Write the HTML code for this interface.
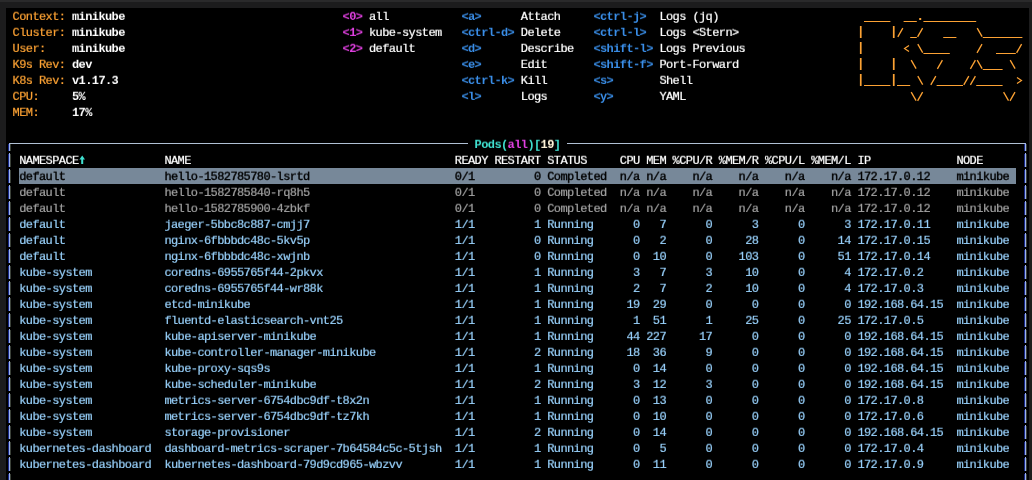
<!DOCTYPE html>
<html><head><meta charset="utf-8"><style>
html,body{margin:0;padding:0;}
body{width:1032px;height:480px;overflow:hidden;background:#1c1c1d;position:relative;font-family:"Liberation Mono",monospace;font-size:12px;}
#topband{position:absolute;left:0;top:0;width:1032px;height:2px;background:#2a2a2b;}
#term{position:absolute;left:6px;top:8px;width:1023px;height:472px;background:#000;}
.row{position:absolute;left:0;width:1032px;height:16px;transform:scaleY(0.92);transform-origin:0 11px;will-change:transform;}
.s{position:absolute;top:0;white-space:pre;height:16px;line-height:16px;letter-spacing:-0.601px;-webkit-text-stroke:0.22px currentColor;}
.b{-webkit-text-stroke:0;}
.b{font-weight:bold;}
.k{-webkit-text-stroke:0.4px #000;}
.ln{position:absolute;background:#b0c0d4;}
</style></head><body>
<div id="topband"></div>
<div id="term"></div>

<div style="position:absolute;left:19.20px;top:168px;width:996.60px;height:16px;background:#778899"></div>
<div class="ln" style="left:9px;top:143px;width:459px;height:1px"></div>
<div class="ln" style="left:567px;top:143px;width:459px;height:1px"></div>
<div style="position:absolute;background:#9cb2ee;left:9px;top:143px;width:1px;height:8px"></div>
<div style="position:absolute;background:#182888;left:8px;top:144px;width:1px;height:7px"></div>
<div style="position:absolute;background:#3a4038;left:10px;top:144px;width:1px;height:7px"></div>
<div style="position:absolute;background:#9cb2ee;left:1025px;top:143px;width:1px;height:8px"></div>
<div style="position:absolute;background:#182888;left:1024px;top:144px;width:1px;height:7px"></div>
<div style="position:absolute;background:#3a4038;left:1026px;top:144px;width:1px;height:7px"></div>
<div style="position:absolute;background:#9cb2ee;left:9px;top:153px;width:1px;height:14px"></div>
<div style="position:absolute;background:#182888;left:8px;top:154px;width:1px;height:13px"></div>
<div style="position:absolute;background:#3a4038;left:10px;top:154px;width:1px;height:13px"></div>
<div style="position:absolute;background:#9cb2ee;left:1025px;top:153px;width:1px;height:14px"></div>
<div style="position:absolute;background:#182888;left:1024px;top:154px;width:1px;height:13px"></div>
<div style="position:absolute;background:#3a4038;left:1026px;top:154px;width:1px;height:13px"></div>
<div style="position:absolute;background:#9cb2ee;left:9px;top:169px;width:1px;height:14px"></div>
<div style="position:absolute;background:#182888;left:8px;top:170px;width:1px;height:13px"></div>
<div style="position:absolute;background:#3a4038;left:10px;top:170px;width:1px;height:13px"></div>
<div style="position:absolute;background:#9cb2ee;left:1025px;top:169px;width:1px;height:14px"></div>
<div style="position:absolute;background:#182888;left:1024px;top:170px;width:1px;height:13px"></div>
<div style="position:absolute;background:#3a4038;left:1026px;top:170px;width:1px;height:13px"></div>
<div style="position:absolute;background:#9cb2ee;left:9px;top:185px;width:1px;height:14px"></div>
<div style="position:absolute;background:#182888;left:8px;top:186px;width:1px;height:13px"></div>
<div style="position:absolute;background:#3a4038;left:10px;top:186px;width:1px;height:13px"></div>
<div style="position:absolute;background:#9cb2ee;left:1025px;top:185px;width:1px;height:14px"></div>
<div style="position:absolute;background:#182888;left:1024px;top:186px;width:1px;height:13px"></div>
<div style="position:absolute;background:#3a4038;left:1026px;top:186px;width:1px;height:13px"></div>
<div style="position:absolute;background:#9cb2ee;left:9px;top:201px;width:1px;height:14px"></div>
<div style="position:absolute;background:#182888;left:8px;top:202px;width:1px;height:13px"></div>
<div style="position:absolute;background:#3a4038;left:10px;top:202px;width:1px;height:13px"></div>
<div style="position:absolute;background:#9cb2ee;left:1025px;top:201px;width:1px;height:14px"></div>
<div style="position:absolute;background:#182888;left:1024px;top:202px;width:1px;height:13px"></div>
<div style="position:absolute;background:#3a4038;left:1026px;top:202px;width:1px;height:13px"></div>
<div style="position:absolute;background:#9cb2ee;left:9px;top:217px;width:1px;height:14px"></div>
<div style="position:absolute;background:#182888;left:8px;top:218px;width:1px;height:13px"></div>
<div style="position:absolute;background:#3a4038;left:10px;top:218px;width:1px;height:13px"></div>
<div style="position:absolute;background:#9cb2ee;left:1025px;top:217px;width:1px;height:14px"></div>
<div style="position:absolute;background:#182888;left:1024px;top:218px;width:1px;height:13px"></div>
<div style="position:absolute;background:#3a4038;left:1026px;top:218px;width:1px;height:13px"></div>
<div style="position:absolute;background:#9cb2ee;left:9px;top:233px;width:1px;height:14px"></div>
<div style="position:absolute;background:#182888;left:8px;top:234px;width:1px;height:13px"></div>
<div style="position:absolute;background:#3a4038;left:10px;top:234px;width:1px;height:13px"></div>
<div style="position:absolute;background:#9cb2ee;left:1025px;top:233px;width:1px;height:14px"></div>
<div style="position:absolute;background:#182888;left:1024px;top:234px;width:1px;height:13px"></div>
<div style="position:absolute;background:#3a4038;left:1026px;top:234px;width:1px;height:13px"></div>
<div style="position:absolute;background:#9cb2ee;left:9px;top:249px;width:1px;height:14px"></div>
<div style="position:absolute;background:#182888;left:8px;top:250px;width:1px;height:13px"></div>
<div style="position:absolute;background:#3a4038;left:10px;top:250px;width:1px;height:13px"></div>
<div style="position:absolute;background:#9cb2ee;left:1025px;top:249px;width:1px;height:14px"></div>
<div style="position:absolute;background:#182888;left:1024px;top:250px;width:1px;height:13px"></div>
<div style="position:absolute;background:#3a4038;left:1026px;top:250px;width:1px;height:13px"></div>
<div style="position:absolute;background:#9cb2ee;left:9px;top:265px;width:1px;height:14px"></div>
<div style="position:absolute;background:#182888;left:8px;top:266px;width:1px;height:13px"></div>
<div style="position:absolute;background:#3a4038;left:10px;top:266px;width:1px;height:13px"></div>
<div style="position:absolute;background:#9cb2ee;left:1025px;top:265px;width:1px;height:14px"></div>
<div style="position:absolute;background:#182888;left:1024px;top:266px;width:1px;height:13px"></div>
<div style="position:absolute;background:#3a4038;left:1026px;top:266px;width:1px;height:13px"></div>
<div style="position:absolute;background:#9cb2ee;left:9px;top:281px;width:1px;height:14px"></div>
<div style="position:absolute;background:#182888;left:8px;top:282px;width:1px;height:13px"></div>
<div style="position:absolute;background:#3a4038;left:10px;top:282px;width:1px;height:13px"></div>
<div style="position:absolute;background:#9cb2ee;left:1025px;top:281px;width:1px;height:14px"></div>
<div style="position:absolute;background:#182888;left:1024px;top:282px;width:1px;height:13px"></div>
<div style="position:absolute;background:#3a4038;left:1026px;top:282px;width:1px;height:13px"></div>
<div style="position:absolute;background:#9cb2ee;left:9px;top:297px;width:1px;height:14px"></div>
<div style="position:absolute;background:#182888;left:8px;top:298px;width:1px;height:13px"></div>
<div style="position:absolute;background:#3a4038;left:10px;top:298px;width:1px;height:13px"></div>
<div style="position:absolute;background:#9cb2ee;left:1025px;top:297px;width:1px;height:14px"></div>
<div style="position:absolute;background:#182888;left:1024px;top:298px;width:1px;height:13px"></div>
<div style="position:absolute;background:#3a4038;left:1026px;top:298px;width:1px;height:13px"></div>
<div style="position:absolute;background:#9cb2ee;left:9px;top:313px;width:1px;height:14px"></div>
<div style="position:absolute;background:#182888;left:8px;top:314px;width:1px;height:13px"></div>
<div style="position:absolute;background:#3a4038;left:10px;top:314px;width:1px;height:13px"></div>
<div style="position:absolute;background:#9cb2ee;left:1025px;top:313px;width:1px;height:14px"></div>
<div style="position:absolute;background:#182888;left:1024px;top:314px;width:1px;height:13px"></div>
<div style="position:absolute;background:#3a4038;left:1026px;top:314px;width:1px;height:13px"></div>
<div style="position:absolute;background:#9cb2ee;left:9px;top:329px;width:1px;height:14px"></div>
<div style="position:absolute;background:#182888;left:8px;top:330px;width:1px;height:13px"></div>
<div style="position:absolute;background:#3a4038;left:10px;top:330px;width:1px;height:13px"></div>
<div style="position:absolute;background:#9cb2ee;left:1025px;top:329px;width:1px;height:14px"></div>
<div style="position:absolute;background:#182888;left:1024px;top:330px;width:1px;height:13px"></div>
<div style="position:absolute;background:#3a4038;left:1026px;top:330px;width:1px;height:13px"></div>
<div style="position:absolute;background:#9cb2ee;left:9px;top:345px;width:1px;height:14px"></div>
<div style="position:absolute;background:#182888;left:8px;top:346px;width:1px;height:13px"></div>
<div style="position:absolute;background:#3a4038;left:10px;top:346px;width:1px;height:13px"></div>
<div style="position:absolute;background:#9cb2ee;left:1025px;top:345px;width:1px;height:14px"></div>
<div style="position:absolute;background:#182888;left:1024px;top:346px;width:1px;height:13px"></div>
<div style="position:absolute;background:#3a4038;left:1026px;top:346px;width:1px;height:13px"></div>
<div style="position:absolute;background:#9cb2ee;left:9px;top:361px;width:1px;height:14px"></div>
<div style="position:absolute;background:#182888;left:8px;top:362px;width:1px;height:13px"></div>
<div style="position:absolute;background:#3a4038;left:10px;top:362px;width:1px;height:13px"></div>
<div style="position:absolute;background:#9cb2ee;left:1025px;top:361px;width:1px;height:14px"></div>
<div style="position:absolute;background:#182888;left:1024px;top:362px;width:1px;height:13px"></div>
<div style="position:absolute;background:#3a4038;left:1026px;top:362px;width:1px;height:13px"></div>
<div style="position:absolute;background:#9cb2ee;left:9px;top:377px;width:1px;height:14px"></div>
<div style="position:absolute;background:#182888;left:8px;top:378px;width:1px;height:13px"></div>
<div style="position:absolute;background:#3a4038;left:10px;top:378px;width:1px;height:13px"></div>
<div style="position:absolute;background:#9cb2ee;left:1025px;top:377px;width:1px;height:14px"></div>
<div style="position:absolute;background:#182888;left:1024px;top:378px;width:1px;height:13px"></div>
<div style="position:absolute;background:#3a4038;left:1026px;top:378px;width:1px;height:13px"></div>
<div style="position:absolute;background:#9cb2ee;left:9px;top:393px;width:1px;height:14px"></div>
<div style="position:absolute;background:#182888;left:8px;top:394px;width:1px;height:13px"></div>
<div style="position:absolute;background:#3a4038;left:10px;top:394px;width:1px;height:13px"></div>
<div style="position:absolute;background:#9cb2ee;left:1025px;top:393px;width:1px;height:14px"></div>
<div style="position:absolute;background:#182888;left:1024px;top:394px;width:1px;height:13px"></div>
<div style="position:absolute;background:#3a4038;left:1026px;top:394px;width:1px;height:13px"></div>
<div style="position:absolute;background:#9cb2ee;left:9px;top:409px;width:1px;height:14px"></div>
<div style="position:absolute;background:#182888;left:8px;top:410px;width:1px;height:13px"></div>
<div style="position:absolute;background:#3a4038;left:10px;top:410px;width:1px;height:13px"></div>
<div style="position:absolute;background:#9cb2ee;left:1025px;top:409px;width:1px;height:14px"></div>
<div style="position:absolute;background:#182888;left:1024px;top:410px;width:1px;height:13px"></div>
<div style="position:absolute;background:#3a4038;left:1026px;top:410px;width:1px;height:13px"></div>
<div style="position:absolute;background:#9cb2ee;left:9px;top:425px;width:1px;height:14px"></div>
<div style="position:absolute;background:#182888;left:8px;top:426px;width:1px;height:13px"></div>
<div style="position:absolute;background:#3a4038;left:10px;top:426px;width:1px;height:13px"></div>
<div style="position:absolute;background:#9cb2ee;left:1025px;top:425px;width:1px;height:14px"></div>
<div style="position:absolute;background:#182888;left:1024px;top:426px;width:1px;height:13px"></div>
<div style="position:absolute;background:#3a4038;left:1026px;top:426px;width:1px;height:13px"></div>
<div style="position:absolute;background:#9cb2ee;left:9px;top:441px;width:1px;height:14px"></div>
<div style="position:absolute;background:#182888;left:8px;top:442px;width:1px;height:13px"></div>
<div style="position:absolute;background:#3a4038;left:10px;top:442px;width:1px;height:13px"></div>
<div style="position:absolute;background:#9cb2ee;left:1025px;top:441px;width:1px;height:14px"></div>
<div style="position:absolute;background:#182888;left:1024px;top:442px;width:1px;height:13px"></div>
<div style="position:absolute;background:#3a4038;left:1026px;top:442px;width:1px;height:13px"></div>
<div style="position:absolute;background:#9cb2ee;left:9px;top:457px;width:1px;height:14px"></div>
<div style="position:absolute;background:#182888;left:8px;top:458px;width:1px;height:13px"></div>
<div style="position:absolute;background:#3a4038;left:10px;top:458px;width:1px;height:13px"></div>
<div style="position:absolute;background:#9cb2ee;left:1025px;top:457px;width:1px;height:14px"></div>
<div style="position:absolute;background:#182888;left:1024px;top:458px;width:1px;height:13px"></div>
<div style="position:absolute;background:#3a4038;left:1026px;top:458px;width:1px;height:13px"></div>
<div style="position:absolute;background:#9cb2ee;left:9px;top:473px;width:1px;height:14px"></div>
<div style="position:absolute;background:#182888;left:8px;top:474px;width:1px;height:13px"></div>
<div style="position:absolute;background:#3a4038;left:10px;top:474px;width:1px;height:13px"></div>
<div style="position:absolute;background:#9cb2ee;left:1025px;top:473px;width:1px;height:14px"></div>
<div style="position:absolute;background:#182888;left:1024px;top:474px;width:1px;height:13px"></div>
<div style="position:absolute;background:#3a4038;left:1026px;top:474px;width:1px;height:13px"></div>
<div class="row" style="top:9px">
<div class="s" style="left:12.60px;color:#fca234">Context:</div>
<div class="s b" style="left:72.00px;color:#ffffff">minikube</div>
<div class="s b" style="left:342.60px;color:#e040e0">&lt;0&gt;</div>
<div class="s" style="left:369.00px;color:#ffffff">all</div>
<div class="s b" style="left:461.40px;color:#3a8ee8">&lt;a&gt;</div>
<div class="s" style="left:520.80px;color:#ffffff">Attach</div>
<div class="s b" style="left:593.40px;color:#3a8ee8">&lt;ctrl-j&gt;</div>
<div class="s" style="left:659.40px;color:#ffffff">Logs (jq)</div>
</div>
<div class="row" style="top:25px">
<div class="s" style="left:12.60px;color:#fca234">Cluster:</div>
<div class="s b" style="left:72.00px;color:#ffffff">minikube</div>
<div class="s b" style="left:342.60px;color:#e040e0">&lt;1&gt;</div>
<div class="s" style="left:369.00px;color:#ffffff">kube-system</div>
<div class="s b" style="left:461.40px;color:#3a8ee8">&lt;ctrl-d&gt;</div>
<div class="s" style="left:520.80px;color:#ffffff">Delete</div>
<div class="s b" style="left:593.40px;color:#3a8ee8">&lt;ctrl-l&gt;</div>
<div class="s" style="left:659.40px;color:#ffffff">Logs &lt;Stern&gt;</div>
</div>
<div class="row" style="top:41px">
<div class="s" style="left:12.60px;color:#fca234">User:</div>
<div class="s b" style="left:72.00px;color:#ffffff">minikube</div>
<div class="s b" style="left:342.60px;color:#e040e0">&lt;2&gt;</div>
<div class="s" style="left:369.00px;color:#ffffff">default</div>
<div class="s b" style="left:461.40px;color:#3a8ee8">&lt;d&gt;</div>
<div class="s" style="left:520.80px;color:#ffffff">Describe</div>
<div class="s b" style="left:593.40px;color:#3a8ee8">&lt;shift-l&gt;</div>
<div class="s" style="left:659.40px;color:#ffffff">Logs Previous</div>
</div>
<div class="row" style="top:57px">
<div class="s" style="left:12.60px;color:#fca234">K9s Rev:</div>
<div class="s b" style="left:72.00px;color:#ffffff">dev</div>
<div class="s b" style="left:461.40px;color:#3a8ee8">&lt;e&gt;</div>
<div class="s" style="left:520.80px;color:#ffffff">Edit</div>
<div class="s b" style="left:593.40px;color:#3a8ee8">&lt;shift-f&gt;</div>
<div class="s" style="left:659.40px;color:#ffffff">Port-Forward</div>
</div>
<div class="row" style="top:73px">
<div class="s" style="left:12.60px;color:#fca234">K8s Rev:</div>
<div class="s b" style="left:72.00px;color:#ffffff">v1.17.3</div>
<div class="s b" style="left:461.40px;color:#3a8ee8">&lt;ctrl-k&gt;</div>
<div class="s" style="left:520.80px;color:#ffffff">Kill</div>
<div class="s b" style="left:593.40px;color:#3a8ee8">&lt;s&gt;</div>
<div class="s" style="left:659.40px;color:#ffffff">Shell</div>
</div>
<div class="row" style="top:89px">
<div class="s" style="left:12.60px;color:#fca234">CPU:</div>
<div class="s b" style="left:72.00px;color:#ffffff">5%</div>
<div class="s b" style="left:461.40px;color:#3a8ee8">&lt;l&gt;</div>
<div class="s" style="left:520.80px;color:#ffffff">Logs</div>
<div class="s b" style="left:593.40px;color:#3a8ee8">&lt;y&gt;</div>
<div class="s" style="left:659.40px;color:#ffffff">YAML</div>
</div>
<div class="row" style="top:105px">
<div class="s" style="left:12.60px;color:#fca234">MEM:</div>
<div class="s b" style="left:72.00px;color:#ffffff">17%</div>
</div>
<div class="row" style="top:137px">
<div class="s b" style="left:474.60px;color:#40e0d0">Pods(</div>
<div class="s b" style="left:507.60px;color:#e040e0">all</div>
<div class="s b" style="left:527.40px;color:#40e0d0">)[</div>
<div class="s b" style="left:540.60px;color:#fff4d8">19</div>
<div class="s b" style="left:553.80px;color:#40e0d0">]</div>
</div>
<div class="row" style="top:153px">
<div class="s" style="left:19.20px;color:#ffffff">NAMESPACE</div>
<div class="s" style="left:164.40px;color:#ffffff">NAME</div>
<div class="s" style="left:454.80px;color:#ffffff">READY</div>
<div class="s" style="left:494.40px;color:#ffffff">RESTART</div>
<div class="s" style="left:547.20px;color:#ffffff">STATUS</div>
<div class="s" style="left:619.80px;color:#ffffff">CPU</div>
<div class="s" style="left:646.20px;color:#ffffff">MEM</div>
<div class="s" style="left:672.60px;color:#ffffff">%CPU/R</div>
<div class="s" style="left:718.80px;color:#ffffff">%MEM/R</div>
<div class="s" style="left:765.00px;color:#ffffff">%CPU/L</div>
<div class="s" style="left:811.20px;color:#ffffff">%MEM/L</div>
<div class="s" style="left:857.40px;color:#ffffff">IP</div>
<div class="s" style="left:956.40px;color:#ffffff">NODE</div>
</div>
<div class="row" style="top:169px">
<div class="s k" style="left:19.20px;color:#000000">default</div>
<div class="s k" style="left:164.40px;color:#000000">hello-1582785780-lsrtd</div>
<div class="s k" style="left:454.80px;color:#000000">0/1</div>
<div class="s k" style="left:534.00px;color:#000000">0</div>
<div class="s k" style="left:547.20px;color:#000000">Completed</div>
<div class="s k" style="left:619.80px;color:#000000">n/a</div>
<div class="s k" style="left:646.20px;color:#000000">n/a</div>
<div class="s k" style="left:692.40px;color:#000000">n/a</div>
<div class="s k" style="left:738.60px;color:#000000">n/a</div>
<div class="s k" style="left:784.80px;color:#000000">n/a</div>
<div class="s k" style="left:831.00px;color:#000000">n/a</div>
<div class="s k" style="left:857.40px;color:#000000">172.17.0.12</div>
<div class="s k" style="left:956.40px;color:#000000">minikube</div>
</div>
<div class="row" style="top:185px">
<div class="s" style="left:19.20px;color:#a0a0a0">default</div>
<div class="s" style="left:164.40px;color:#a0a0a0">hello-1582785840-rq8h5</div>
<div class="s" style="left:454.80px;color:#a0a0a0">0/1</div>
<div class="s" style="left:534.00px;color:#a0a0a0">0</div>
<div class="s" style="left:547.20px;color:#a0a0a0">Completed</div>
<div class="s" style="left:619.80px;color:#a0a0a0">n/a</div>
<div class="s" style="left:646.20px;color:#a0a0a0">n/a</div>
<div class="s" style="left:692.40px;color:#a0a0a0">n/a</div>
<div class="s" style="left:738.60px;color:#a0a0a0">n/a</div>
<div class="s" style="left:784.80px;color:#a0a0a0">n/a</div>
<div class="s" style="left:831.00px;color:#a0a0a0">n/a</div>
<div class="s" style="left:857.40px;color:#a0a0a0">172.17.0.12</div>
<div class="s" style="left:956.40px;color:#a0a0a0">minikube</div>
</div>
<div class="row" style="top:201px">
<div class="s" style="left:19.20px;color:#a0a0a0">default</div>
<div class="s" style="left:164.40px;color:#a0a0a0">hello-1582785900-4zbkf</div>
<div class="s" style="left:454.80px;color:#a0a0a0">0/1</div>
<div class="s" style="left:534.00px;color:#a0a0a0">0</div>
<div class="s" style="left:547.20px;color:#a0a0a0">Completed</div>
<div class="s" style="left:619.80px;color:#a0a0a0">n/a</div>
<div class="s" style="left:646.20px;color:#a0a0a0">n/a</div>
<div class="s" style="left:692.40px;color:#a0a0a0">n/a</div>
<div class="s" style="left:738.60px;color:#a0a0a0">n/a</div>
<div class="s" style="left:784.80px;color:#a0a0a0">n/a</div>
<div class="s" style="left:831.00px;color:#a0a0a0">n/a</div>
<div class="s" style="left:857.40px;color:#a0a0a0">172.17.0.12</div>
<div class="s" style="left:956.40px;color:#a0a0a0">minikube</div>
</div>
<div class="row" style="top:217px">
<div class="s" style="left:19.20px;color:#96cef8">default</div>
<div class="s" style="left:164.40px;color:#96cef8">jaeger-5bbc8c887-cmjj7</div>
<div class="s" style="left:454.80px;color:#96cef8">1/1</div>
<div class="s" style="left:534.00px;color:#96cef8">1</div>
<div class="s" style="left:547.20px;color:#96cef8">Running</div>
<div class="s" style="left:633.00px;color:#96cef8">0</div>
<div class="s" style="left:659.40px;color:#96cef8">7</div>
<div class="s" style="left:705.60px;color:#96cef8">0</div>
<div class="s" style="left:751.80px;color:#96cef8">3</div>
<div class="s" style="left:798.00px;color:#96cef8">0</div>
<div class="s" style="left:844.20px;color:#96cef8">3</div>
<div class="s" style="left:857.40px;color:#96cef8">172.17.0.11</div>
<div class="s" style="left:956.40px;color:#96cef8">minikube</div>
</div>
<div class="row" style="top:233px">
<div class="s" style="left:19.20px;color:#96cef8">default</div>
<div class="s" style="left:164.40px;color:#96cef8">nginx-6fbbbdc48c-5kv5p</div>
<div class="s" style="left:454.80px;color:#96cef8">1/1</div>
<div class="s" style="left:534.00px;color:#96cef8">0</div>
<div class="s" style="left:547.20px;color:#96cef8">Running</div>
<div class="s" style="left:633.00px;color:#96cef8">0</div>
<div class="s" style="left:659.40px;color:#96cef8">2</div>
<div class="s" style="left:705.60px;color:#96cef8">0</div>
<div class="s" style="left:745.20px;color:#96cef8">28</div>
<div class="s" style="left:798.00px;color:#96cef8">0</div>
<div class="s" style="left:837.60px;color:#96cef8">14</div>
<div class="s" style="left:857.40px;color:#96cef8">172.17.0.15</div>
<div class="s" style="left:956.40px;color:#96cef8">minikube</div>
</div>
<div class="row" style="top:249px">
<div class="s" style="left:19.20px;color:#96cef8">default</div>
<div class="s" style="left:164.40px;color:#96cef8">nginx-6fbbbdc48c-xwjnb</div>
<div class="s" style="left:454.80px;color:#96cef8">1/1</div>
<div class="s" style="left:534.00px;color:#96cef8">0</div>
<div class="s" style="left:547.20px;color:#96cef8">Running</div>
<div class="s" style="left:633.00px;color:#96cef8">0</div>
<div class="s" style="left:652.80px;color:#96cef8">10</div>
<div class="s" style="left:705.60px;color:#96cef8">0</div>
<div class="s" style="left:738.60px;color:#96cef8">103</div>
<div class="s" style="left:798.00px;color:#96cef8">0</div>
<div class="s" style="left:837.60px;color:#96cef8">51</div>
<div class="s" style="left:857.40px;color:#96cef8">172.17.0.14</div>
<div class="s" style="left:956.40px;color:#96cef8">minikube</div>
</div>
<div class="row" style="top:265px">
<div class="s" style="left:19.20px;color:#96cef8">kube-system</div>
<div class="s" style="left:164.40px;color:#96cef8">coredns-6955765f44-2pkvx</div>
<div class="s" style="left:454.80px;color:#96cef8">1/1</div>
<div class="s" style="left:534.00px;color:#96cef8">1</div>
<div class="s" style="left:547.20px;color:#96cef8">Running</div>
<div class="s" style="left:633.00px;color:#96cef8">3</div>
<div class="s" style="left:659.40px;color:#96cef8">7</div>
<div class="s" style="left:705.60px;color:#96cef8">3</div>
<div class="s" style="left:745.20px;color:#96cef8">10</div>
<div class="s" style="left:798.00px;color:#96cef8">0</div>
<div class="s" style="left:844.20px;color:#96cef8">4</div>
<div class="s" style="left:857.40px;color:#96cef8">172.17.0.2</div>
<div class="s" style="left:956.40px;color:#96cef8">minikube</div>
</div>
<div class="row" style="top:281px">
<div class="s" style="left:19.20px;color:#96cef8">kube-system</div>
<div class="s" style="left:164.40px;color:#96cef8">coredns-6955765f44-wr88k</div>
<div class="s" style="left:454.80px;color:#96cef8">1/1</div>
<div class="s" style="left:534.00px;color:#96cef8">1</div>
<div class="s" style="left:547.20px;color:#96cef8">Running</div>
<div class="s" style="left:633.00px;color:#96cef8">2</div>
<div class="s" style="left:659.40px;color:#96cef8">7</div>
<div class="s" style="left:705.60px;color:#96cef8">2</div>
<div class="s" style="left:745.20px;color:#96cef8">10</div>
<div class="s" style="left:798.00px;color:#96cef8">0</div>
<div class="s" style="left:844.20px;color:#96cef8">4</div>
<div class="s" style="left:857.40px;color:#96cef8">172.17.0.3</div>
<div class="s" style="left:956.40px;color:#96cef8">minikube</div>
</div>
<div class="row" style="top:297px">
<div class="s" style="left:19.20px;color:#96cef8">kube-system</div>
<div class="s" style="left:164.40px;color:#96cef8">etcd-minikube</div>
<div class="s" style="left:454.80px;color:#96cef8">1/1</div>
<div class="s" style="left:534.00px;color:#96cef8">1</div>
<div class="s" style="left:547.20px;color:#96cef8">Running</div>
<div class="s" style="left:626.40px;color:#96cef8">19</div>
<div class="s" style="left:652.80px;color:#96cef8">29</div>
<div class="s" style="left:705.60px;color:#96cef8">0</div>
<div class="s" style="left:751.80px;color:#96cef8">0</div>
<div class="s" style="left:798.00px;color:#96cef8">0</div>
<div class="s" style="left:844.20px;color:#96cef8">0</div>
<div class="s" style="left:857.40px;color:#96cef8">192.168.64.15</div>
<div class="s" style="left:956.40px;color:#96cef8">minikube</div>
</div>
<div class="row" style="top:313px">
<div class="s" style="left:19.20px;color:#96cef8">kube-system</div>
<div class="s" style="left:164.40px;color:#96cef8">fluentd-elasticsearch-vnt25</div>
<div class="s" style="left:454.80px;color:#96cef8">1/1</div>
<div class="s" style="left:534.00px;color:#96cef8">1</div>
<div class="s" style="left:547.20px;color:#96cef8">Running</div>
<div class="s" style="left:633.00px;color:#96cef8">1</div>
<div class="s" style="left:652.80px;color:#96cef8">51</div>
<div class="s" style="left:705.60px;color:#96cef8">1</div>
<div class="s" style="left:745.20px;color:#96cef8">25</div>
<div class="s" style="left:798.00px;color:#96cef8">0</div>
<div class="s" style="left:837.60px;color:#96cef8">25</div>
<div class="s" style="left:857.40px;color:#96cef8">172.17.0.5</div>
<div class="s" style="left:956.40px;color:#96cef8">minikube</div>
</div>
<div class="row" style="top:329px">
<div class="s" style="left:19.20px;color:#96cef8">kube-system</div>
<div class="s" style="left:164.40px;color:#96cef8">kube-apiserver-minikube</div>
<div class="s" style="left:454.80px;color:#96cef8">1/1</div>
<div class="s" style="left:534.00px;color:#96cef8">1</div>
<div class="s" style="left:547.20px;color:#96cef8">Running</div>
<div class="s" style="left:626.40px;color:#96cef8">44</div>
<div class="s" style="left:646.20px;color:#96cef8">227</div>
<div class="s" style="left:699.00px;color:#96cef8">17</div>
<div class="s" style="left:751.80px;color:#96cef8">0</div>
<div class="s" style="left:798.00px;color:#96cef8">0</div>
<div class="s" style="left:844.20px;color:#96cef8">0</div>
<div class="s" style="left:857.40px;color:#96cef8">192.168.64.15</div>
<div class="s" style="left:956.40px;color:#96cef8">minikube</div>
</div>
<div class="row" style="top:345px">
<div class="s" style="left:19.20px;color:#96cef8">kube-system</div>
<div class="s" style="left:164.40px;color:#96cef8">kube-controller-manager-minikube</div>
<div class="s" style="left:454.80px;color:#96cef8">1/1</div>
<div class="s" style="left:534.00px;color:#96cef8">2</div>
<div class="s" style="left:547.20px;color:#96cef8">Running</div>
<div class="s" style="left:626.40px;color:#96cef8">18</div>
<div class="s" style="left:652.80px;color:#96cef8">36</div>
<div class="s" style="left:705.60px;color:#96cef8">9</div>
<div class="s" style="left:751.80px;color:#96cef8">0</div>
<div class="s" style="left:798.00px;color:#96cef8">0</div>
<div class="s" style="left:844.20px;color:#96cef8">0</div>
<div class="s" style="left:857.40px;color:#96cef8">192.168.64.15</div>
<div class="s" style="left:956.40px;color:#96cef8">minikube</div>
</div>
<div class="row" style="top:361px">
<div class="s" style="left:19.20px;color:#96cef8">kube-system</div>
<div class="s" style="left:164.40px;color:#96cef8">kube-proxy-sqs9s</div>
<div class="s" style="left:454.80px;color:#96cef8">1/1</div>
<div class="s" style="left:534.00px;color:#96cef8">1</div>
<div class="s" style="left:547.20px;color:#96cef8">Running</div>
<div class="s" style="left:633.00px;color:#96cef8">0</div>
<div class="s" style="left:652.80px;color:#96cef8">14</div>
<div class="s" style="left:705.60px;color:#96cef8">0</div>
<div class="s" style="left:751.80px;color:#96cef8">0</div>
<div class="s" style="left:798.00px;color:#96cef8">0</div>
<div class="s" style="left:844.20px;color:#96cef8">0</div>
<div class="s" style="left:857.40px;color:#96cef8">192.168.64.15</div>
<div class="s" style="left:956.40px;color:#96cef8">minikube</div>
</div>
<div class="row" style="top:377px">
<div class="s" style="left:19.20px;color:#96cef8">kube-system</div>
<div class="s" style="left:164.40px;color:#96cef8">kube-scheduler-minikube</div>
<div class="s" style="left:454.80px;color:#96cef8">1/1</div>
<div class="s" style="left:534.00px;color:#96cef8">2</div>
<div class="s" style="left:547.20px;color:#96cef8">Running</div>
<div class="s" style="left:633.00px;color:#96cef8">3</div>
<div class="s" style="left:652.80px;color:#96cef8">12</div>
<div class="s" style="left:705.60px;color:#96cef8">3</div>
<div class="s" style="left:751.80px;color:#96cef8">0</div>
<div class="s" style="left:798.00px;color:#96cef8">0</div>
<div class="s" style="left:844.20px;color:#96cef8">0</div>
<div class="s" style="left:857.40px;color:#96cef8">192.168.64.15</div>
<div class="s" style="left:956.40px;color:#96cef8">minikube</div>
</div>
<div class="row" style="top:393px">
<div class="s" style="left:19.20px;color:#96cef8">kube-system</div>
<div class="s" style="left:164.40px;color:#96cef8">metrics-server-6754dbc9df-t8x2n</div>
<div class="s" style="left:454.80px;color:#96cef8">1/1</div>
<div class="s" style="left:534.00px;color:#96cef8">1</div>
<div class="s" style="left:547.20px;color:#96cef8">Running</div>
<div class="s" style="left:633.00px;color:#96cef8">0</div>
<div class="s" style="left:652.80px;color:#96cef8">13</div>
<div class="s" style="left:705.60px;color:#96cef8">0</div>
<div class="s" style="left:751.80px;color:#96cef8">0</div>
<div class="s" style="left:798.00px;color:#96cef8">0</div>
<div class="s" style="left:844.20px;color:#96cef8">0</div>
<div class="s" style="left:857.40px;color:#96cef8">172.17.0.8</div>
<div class="s" style="left:956.40px;color:#96cef8">minikube</div>
</div>
<div class="row" style="top:409px">
<div class="s" style="left:19.20px;color:#96cef8">kube-system</div>
<div class="s" style="left:164.40px;color:#96cef8">metrics-server-6754dbc9df-tz7kh</div>
<div class="s" style="left:454.80px;color:#96cef8">1/1</div>
<div class="s" style="left:534.00px;color:#96cef8">1</div>
<div class="s" style="left:547.20px;color:#96cef8">Running</div>
<div class="s" style="left:633.00px;color:#96cef8">0</div>
<div class="s" style="left:652.80px;color:#96cef8">10</div>
<div class="s" style="left:705.60px;color:#96cef8">0</div>
<div class="s" style="left:751.80px;color:#96cef8">0</div>
<div class="s" style="left:798.00px;color:#96cef8">0</div>
<div class="s" style="left:844.20px;color:#96cef8">0</div>
<div class="s" style="left:857.40px;color:#96cef8">172.17.0.6</div>
<div class="s" style="left:956.40px;color:#96cef8">minikube</div>
</div>
<div class="row" style="top:425px">
<div class="s" style="left:19.20px;color:#96cef8">kube-system</div>
<div class="s" style="left:164.40px;color:#96cef8">storage-provisioner</div>
<div class="s" style="left:454.80px;color:#96cef8">1/1</div>
<div class="s" style="left:534.00px;color:#96cef8">2</div>
<div class="s" style="left:547.20px;color:#96cef8">Running</div>
<div class="s" style="left:633.00px;color:#96cef8">0</div>
<div class="s" style="left:652.80px;color:#96cef8">14</div>
<div class="s" style="left:705.60px;color:#96cef8">0</div>
<div class="s" style="left:751.80px;color:#96cef8">0</div>
<div class="s" style="left:798.00px;color:#96cef8">0</div>
<div class="s" style="left:844.20px;color:#96cef8">0</div>
<div class="s" style="left:857.40px;color:#96cef8">192.168.64.15</div>
<div class="s" style="left:956.40px;color:#96cef8">minikube</div>
</div>
<div class="row" style="top:441px">
<div class="s" style="left:19.20px;color:#96cef8">kubernetes-dashboard</div>
<div class="s" style="left:164.40px;color:#96cef8">dashboard-metrics-scraper-7b64584c5c-5tjsh</div>
<div class="s" style="left:454.80px;color:#96cef8">1/1</div>
<div class="s" style="left:534.00px;color:#96cef8">1</div>
<div class="s" style="left:547.20px;color:#96cef8">Running</div>
<div class="s" style="left:633.00px;color:#96cef8">0</div>
<div class="s" style="left:659.40px;color:#96cef8">5</div>
<div class="s" style="left:705.60px;color:#96cef8">0</div>
<div class="s" style="left:751.80px;color:#96cef8">0</div>
<div class="s" style="left:798.00px;color:#96cef8">0</div>
<div class="s" style="left:844.20px;color:#96cef8">0</div>
<div class="s" style="left:857.40px;color:#96cef8">172.17.0.4</div>
<div class="s" style="left:956.40px;color:#96cef8">minikube</div>
</div>
<div class="row" style="top:457px">
<div class="s" style="left:19.20px;color:#96cef8">kubernetes-dashboard</div>
<div class="s" style="left:164.40px;color:#96cef8">kubernetes-dashboard-79d9cd965-wbzvv</div>
<div class="s" style="left:454.80px;color:#96cef8">1/1</div>
<div class="s" style="left:534.00px;color:#96cef8">1</div>
<div class="s" style="left:547.20px;color:#96cef8">Running</div>
<div class="s" style="left:633.00px;color:#96cef8">0</div>
<div class="s" style="left:652.80px;color:#96cef8">11</div>
<div class="s" style="left:705.60px;color:#96cef8">0</div>
<div class="s" style="left:751.80px;color:#96cef8">0</div>
<div class="s" style="left:798.00px;color:#96cef8">0</div>
<div class="s" style="left:844.20px;color:#96cef8">0</div>
<div class="s" style="left:857.40px;color:#96cef8">172.17.0.9</div>
<div class="s" style="left:956.40px;color:#96cef8">minikube</div>
</div>
<svg style="position:absolute;left:79px;top:155px" width="7" height="9"><path d="M0.4 4.4 L3.2 0.6 L6 4.4 Z" fill="#40e0d0"/><rect x="2.2" y="3" width="2" height="6" fill="#40e0d0"/></svg>
<svg style="position:absolute;left:0;top:0" width="1032" height="480" fill="#fca234"><g><rect x="864.00" y="21" width="26.40" height="1"/><rect x="903.60" y="21" width="13.20" height="1"/><rect x="919.20" y="18" width="2" height="2"/><rect x="923.40" y="21" width="52.80" height="1"/><rect x="859.90" y="26" width="1.7" height="12"/><rect x="892.90" y="26" width="1.7" height="12"/><path stroke="#fca234" d="M897.80 36.80L902.80 28.20" stroke-width="1.3"/><rect x="910.20" y="37" width="6.60" height="1"/><path stroke="#fca234" d="M917.60 36.80L922.60 28.20" stroke-width="1.3"/><rect x="943.20" y="37" width="13.20" height="1"/><path stroke="#fca234" d="M977.20 28.20L982.10 36.60" stroke-width="1.3"/><rect x="982.80" y="37" width="39.60" height="1"/><rect x="859.90" y="42" width="1.7" height="12"/><path stroke="#fca234" d="M909.00 45.40L904.50 48.50L909.00 51.60" stroke-width="1.2" fill="none"/><path stroke="#fca234" d="M917.80 44.20L922.70 52.60" stroke-width="1.3"/><rect x="923.40" y="53" width="26.40" height="1"/><path stroke="#fca234" d="M977.00 52.80L982.00 44.20" stroke-width="1.3"/><rect x="996.00" y="53" width="19.80" height="1"/><path stroke="#fca234" d="M1016.60 52.80L1021.60 44.20" stroke-width="1.3"/><rect x="859.90" y="58" width="1.7" height="12"/><rect x="892.90" y="58" width="1.7" height="12"/><path stroke="#fca234" d="M911.20 60.20L916.10 68.60" stroke-width="1.3"/><path stroke="#fca234" d="M937.40 68.80L942.40 60.20" stroke-width="1.3"/><path stroke="#fca234" d="M970.40 68.80L975.40 60.20" stroke-width="1.3"/><path stroke="#fca234" d="M977.20 60.20L982.10 68.60" stroke-width="1.3"/><rect x="982.80" y="69" width="19.80" height="1"/><path stroke="#fca234" d="M1010.20 60.20L1015.10 68.60" stroke-width="1.3"/><rect x="859.90" y="74" width="1.7" height="12"/><rect x="864.00" y="85" width="26.40" height="1"/><rect x="892.90" y="74" width="1.7" height="12"/><rect x="897.00" y="85" width="13.20" height="1"/><path stroke="#fca234" d="M917.80 76.20L922.70 84.60" stroke-width="1.3"/><path stroke="#fca234" d="M930.80 84.80L935.80 76.20" stroke-width="1.3"/><rect x="936.60" y="85" width="26.40" height="1"/><path stroke="#fca234" d="M963.80 84.80L968.80 76.20" stroke-width="1.3"/><path stroke="#fca234" d="M970.40 84.80L975.40 76.20" stroke-width="1.3"/><rect x="976.20" y="85" width="26.40" height="1"/><path stroke="#fca234" d="M1017.00 77.40L1021.50 80.50L1017.00 83.60" stroke-width="1.2" fill="none"/><path stroke="#fca234" d="M911.20 92.20L916.10 100.60" stroke-width="1.3"/><path stroke="#fca234" d="M917.60 100.80L922.60 92.20" stroke-width="1.3"/><path stroke="#fca234" d="M1003.60 92.20L1008.50 100.60" stroke-width="1.3"/><path stroke="#fca234" d="M1010.00 100.80L1015.00 92.20" stroke-width="1.3"/></g></svg>
</body></html>
